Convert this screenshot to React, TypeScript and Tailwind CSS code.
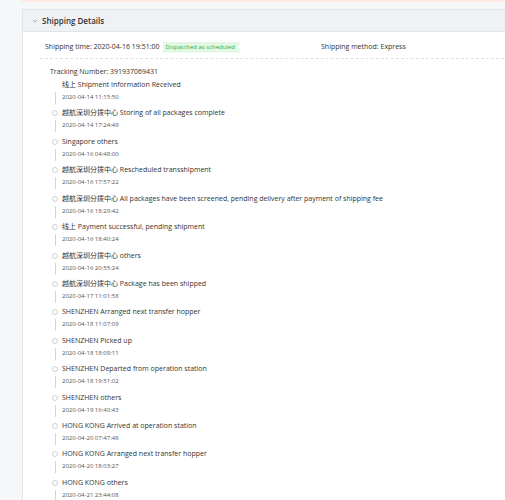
import React from "react";

const events = [
  { title: "线上 Shipment Information Received", time: "2020-04-14 11:15:50" },
  { title: "越航深圳分拨中心 Storing of all packages complete", time: "2020-04-14 17:24:49" },
  { title: "Singapore others", time: "2020-04-16 04:48:00" },
  { title: "越航深圳分拨中心 Rescheduled transshipment", time: "2020-04-16 17:57:22" },
  { title: "越航深圳分拨中心 All packages have been screened, pending delivery after payment of shipping fee", time: "2020-04-16 18:29:42" },
  { title: "线上 Payment successful, pending shipment", time: "2020-04-16 18:40:24" },
  { title: "越航深圳分拨中心 others", time: "2020-04-16 20:55:24" },
  { title: "越航深圳分拨中心 Package has been shipped", time: "2020-04-17 11:01:58" },
  { title: "SHENZHEN Arranged next transfer hopper", time: "2020-04-18 11:07:09" },
  { title: "SHENZHEN Picked up", time: "2020-04-18 18:09:11" },
  { title: "SHENZHEN Departed from operation station", time: "2020-04-18 19:51:02" },
  { title: "SHENZHEN others", time: "2020-04-19 16:40:43" },
  { title: "HONG KONG Arrived at operation station", time: "2020-04-20 07:47:48" },
  { title: "HONG KONG Arranged next transfer hopper", time: "2020-04-20 18:03:27" },
  { title: "HONG KONG others", time: "2020-04-21 23:44:08" },
];

const App = () => {
  return (
    <div className="w-[505px] h-[500px] overflow-hidden bg-[#f6f7f9] font-['Open_Sans','Noto_Sans_CJK_SC',sans-serif] text-[#333]">
      {/* 上一张卡片的底边 */}
      <div className="ml-[22px] h-[2px] bg-[#fde9e1]" />

      <div className="ml-[22px] mt-[7px] w-[520px] border border-[#e2e4ea] bg-white">
        {/* header */}
        <div className="flex h-[22px] items-center gap-[4px] border-b border-[#e2e4ea] bg-[#f0f1f5] pl-[9px]">
          <svg width="6" height="6" viewBox="0 0 6 6" className="text-[#999]">
            <path d="M1 2 L3 4 L5 2" fill="none" stroke="currentColor" strokeWidth="0.8" />
          </svg>
          <span className="text-[8px] font-semibold leading-none text-[#333]">Shipping Details</span>
        </div>

        <div className="px-[17px]">
          {/* shipping row */}
          <div className="flex border-b border-dashed border-[#e0e0e0] pt-[9px] pb-[5px] pl-[5px] text-[7px] leading-[12px]">
            <div className="flex w-[276px] items-center gap-[3px]">
              <span>Shipping time: 2020-04-16 19:51:00</span>
              <span className="flex h-[11px] items-center bg-[#e2f7e4] pl-[3px] pr-[6px] text-[6px] font-medium text-[#2ab340] [clip-path:polygon(0_0,100%_0,calc(100%-3px)_50%,100%_100%,0_100%)]">
                Dispatched as scheduled
              </span>
            </div>
            <span>Shipping method: Express</span>
          </div>

          {/* tracking */}
          <div className="pl-[10px] pt-[7px]">
            <div className="text-[7px] leading-[12px]">Tracking Number: 391937069431</div>
            <div className="mt-[1px] flex flex-col">
              {events.map((ev, i) => (
                <div key={i} className="flex h-[28.43px]">
                  <div className="flex w-[12px] flex-col">
                    <div className="flex h-[12px] items-center">
                      {i > 0 && (
                        <span className="ml-[2px] h-[6px] w-[6px] rounded-full border border-[#cfcfcf] bg-white" />
                      )}
                    </div>
                    <div className="ml-[5px] mt-[1px] h-[12px] w-px bg-[#d4d4d4]" />
                  </div>
                  <div className="flex flex-col">
                    <span className="whitespace-nowrap text-[7px] leading-[12px] text-[#333]">{ev.title}</span>
                    <span className="text-[6px] leading-[12px] text-[#555]">{ev.time}</span>
                  </div>
                </div>
              ))}
            </div>
          </div>
        </div>
      </div>
    </div>
  );
};

export default App;
